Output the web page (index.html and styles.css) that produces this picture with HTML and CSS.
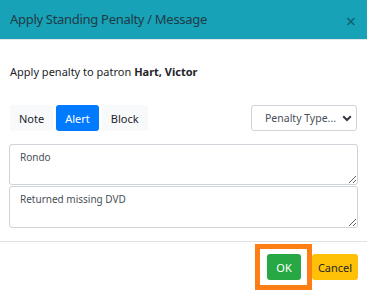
FILE: index.html
```html
<!DOCTYPE html>
<html lang="en">
<head>
    <meta charset="UTF-8">
    <title>Apply Standing Penalty / Message</title>
    <link rel="stylesheet" href="styles.css">
</head>
<body>
<div class="modal">
    <div class="modal-header">
        <h4 class="modal-title">Apply Standing Penalty / Message</h4>
        <span class="close">&times;</span>
    </div>
    <div class="modal-body">
        <p class="patron">Apply penalty to patron <b>Hart, Victor</b></p>
        <div class="toolbar">
            <div class="btn-group">
                <button class="btn btn-light">Note</button>
                <button class="btn btn-primary">Alert</button>
                <button class="btn btn-light">Block</button>
            </div>
            <div class="select-wrap">
                <select class="penalty-select">
                    <option>Penalty Type...</option>
                </select>
                <svg class="chevron" width="10" height="7" viewBox="0 0 10 7">
                    <path d="M1.2 1.3 L5 5 L8.8 1.3" fill="none" stroke="#343a40" stroke-width="2"/>
                </svg>
            </div>
        </div>
        <textarea class="note-input" rows="2">Rondo</textarea>
        <textarea class="note-input" rows="2">Returned missing DVD</textarea>
    </div>
    <div class="modal-footer">
        <span class="highlight"><button class="btn btn-success">OK</button></span>
        <button class="btn btn-warning">Cancel</button>
    </div>
</div>
</body>
</html>
```

FILE: styles.css
```css
body {
    margin: 0;
    font-family: "Noto Sans", "Open Sans", sans-serif;
    color: #212529;
    background: #fff;
}

.modal {
    width: 367px;
    height: 293px;
    overflow: hidden;
}

.modal-header {
    height: 40px;
    background-color: #17a2b8;
    border-bottom: 1px solid #e3e6e8;
    display: flex;
    align-items: center;
    justify-content: space-between;
    padding: 0 10px;
    box-sizing: border-box;
}

.modal-title {
    margin: 0;
    font-size: 13px;
    letter-spacing: -0.3px;
    font-weight: normal;
    color: #1f3b44;
    position: relative;
    top: -1px;
}

.close {
    font-size: 18px;
    color: #0d5f6c;
    line-height: 1;
    margin-right: 1px;
    margin-top: 3px;
}

.modal-body {
    padding: 25px 9px 12px 9px;
}

.patron {
    margin: 0 0 0 1px;
    font-size: 11px;
    line-height: 14px;
}

.toolbar {
    display: flex;
    justify-content: space-between;
    margin-top: 26px;
    margin-bottom: 13px;
}

.btn-group {
    display: flex;
    gap: 3px;
    margin-left: 1px;
}

.btn {
    font-family: inherit;
    font-size: 11px;
    border: none;
    border-radius: 3px;
    height: 26px;
    padding: 0 9px;
    cursor: pointer;
}

.btn-light {
    background-color: #f8f9fa;
    color: #212529;
}

.btn-primary {
    background-color: #007bff;
    color: #fff;
}

.btn-success {
    background-color: #28a745;
    color: #fff;
    width: 34px;
    padding: 0;
}

.btn-warning {
    background-color: #ffc107;
    color: #212529;
    width: 46px;
    padding: 0;
}

.select-wrap {
    position: relative;
    margin-right: 1px;
}

.penalty-select {
    appearance: none;
    -webkit-appearance: none;
    width: 106px;
    height: 26px;
    border: 1px solid #ced4da;
    border-radius: 3px;
    background: #fff;
    font-family: inherit;
    font-size: 10.5px;
    color: #495057;
    padding: 0 0 0 13px;
}

.chevron {
    position: absolute;
    right: 5px;
    top: 10px;
    pointer-events: none;
}

.note-input {
    display: block;
    width: 349px;
    height: 41px;
    box-sizing: border-box;
    border: 1px solid #ced4da;
    border-radius: 3px;
    font-family: inherit;
    font-size: 10px;
    color: #495057;
    padding: 5px 10px;
    margin: 0 0 1px 0;
}

.note-input + .note-input {
    height: 42px;
}

.modal-footer {
    border-top: 1px solid #dee2e6;
    display: flex;
    justify-content: flex-end;
    align-items: center;
    padding: 2px 9px 0 0;
}

.highlight {
    display: flex;
    border: 5px solid #fd7e14;
    padding: 5px 6px 5px 7px;
}
```
